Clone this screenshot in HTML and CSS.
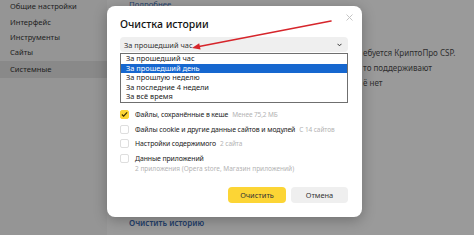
FILE: index.html
```html
<!DOCTYPE html>
<html lang="ru">
<head>
<meta charset="utf-8">
<link rel="stylesheet" href="styles.css">
</head>
<body>
<div class="page">
  <aside class="sidebar">
    <div class="nav-item">Общие настройки</div>
    <div class="nav-item">Интерфейс</div>
    <div class="nav-item">Инструменты</div>
    <div class="nav-item">Сайты</div>
    <div class="nav-item active">Системные</div>
  </aside>
  <main class="content">
    <div class="link more">Подробнее</div>
    <div class="text-lines">
      <div class="line">ебуется КриптоПро CSP.</div>
      <div class="line">то поддерживают</div>
      <div class="line">ё нет</div>
    </div>
    <div class="link clear-link">Очистить историю</div>
  </main>
</div>

<div class="modal">
  <div class="close">
    <svg width="7" height="7" viewBox="0 0 7 7"><path d="M0.5 0.5L6.5 6.5M6.5 0.5L0.5 6.5" stroke="#c4c4c4" stroke-width="1"/></svg>
  </div>
  <div class="title">Очистка истории</div>
  <div class="select">
    <span>За прошедший час</span>
    <svg class="chev" width="5" height="4" viewBox="0 0 5 4"><path d="M0.5 0.8L2.5 2.8L4.5 0.8" fill="none" stroke="#333" stroke-width="1"/></svg>
  </div>
  <div class="dropdown">
    <div class="opt">За прошедший час</div>
    <div class="opt selected">За прошедший день</div>
    <div class="opt">За прошлую неделю</div>
    <div class="opt">За последние 4 недели</div>
    <div class="opt">За всё время</div>
  </div>
  <div class="checks">
    <div class="row">
      <span class="box checked"><svg width="8" height="7" viewBox="0 0 8 7"><path d="M1 3.5L3 5.5L7 1.2" fill="none" stroke="#3a3000" stroke-width="1.3"/></svg></span>
      <span class="label">Файлы, сохранённые в кеше</span><span class="hint">Менее 75,2 МБ</span>
    </div>
    <div class="row">
      <span class="box"></span>
      <span class="label">Файлы cookie и другие данные сайтов и модулей</span><span class="hint">С 14 сайтов</span>
    </div>
    <div class="row">
      <span class="box"></span>
      <span class="label">Настройки содержимого</span><span class="hint">2 сайта</span>
    </div>
    <div class="row">
      <span class="box"></span>
      <span class="label">Данные приложений</span>
    </div>
    <div class="sub">2 приложения (Opera store, Магазин приложений)</div>
  </div>
  <div class="buttons">
    <div class="btn primary">Очистить</div>
    <div class="btn">Отмена</div>
  </div>
</div>

<svg class="arrow" width="474" height="235" viewBox="0 0 474 235">
  <line x1="331" y1="21" x2="199" y2="46.5" stroke="#d6252b" stroke-width="1.6" stroke-linecap="round"/>
  <polygon points="192,48 200.6,49.6 199.2,43.2" fill="#d6252b"/>
</svg>
</body>
</html>
```

FILE: styles.css
```css
html, body {
  margin: 0;
  padding: 0;
}
body {
  width: 474px;
  height: 235px;
  overflow: hidden;
  position: relative;
  font-family: "Noto Sans", "Open Sans", sans-serif;
  background: #9a9a9a;
  color: #222;
}
.page {
  display: flex;
  height: 235px;
}
.sidebar {
  width: 107px;
  flex: none;
  background: #959595;
  display: flex;
  flex-direction: column;
}
.nav-item {
  height: 15.4px;
  line-height: 15.4px;
  padding-left: 10px;
  font-size: 7.6px;
  color: #1e1e1e;
}
.nav-item:first-child {
  margin-top: -0.7px;
}
.nav-item.active {
  background: #898989;
  height: 17px;
  line-height: 17px;
}
.content {
  flex: 1;
  padding-left: 22px;
  display: flex;
  flex-direction: column;
}
.link {
  color: #24406b;
  font-size: 7.8px;
}
.more {
  margin-top: -1px;
  line-height: 10px;
}
.text-lines {
  margin-top: 36px;
  padding-left: 234px;
  display: flex;
  flex-direction: column;
}
.line {
  font-size: 8px;
  line-height: 15px;
  color: #2e2e2e;
  white-space: nowrap;
}
.clear-link {
  margin-top: 127px;
  font-weight: 600;
  font-size: 8px;
  line-height: 12px;
}

.modal {
  position: absolute;
  left: 107px;
  top: 6px;
  width: 255px;
  height: 211px;
  box-sizing: border-box;
  padding: 11px 14px 14px 13px;
  background: #fff;
  border-radius: 8px;
  box-shadow: 0 3px 14px rgba(0, 0, 0, 0.28);
  display: flex;
  flex-direction: column;
}
.close {
  position: absolute;
  right: 9px;
  top: 8px;
  display: flex;
}
.title {
  font-size: 10.5px;
  line-height: 14px;
  font-weight: 500;
  color: #111;
}
.select {
  margin-top: 6px;
  height: 15px;
  border-radius: 4px;
  background: #efefef;
  display: flex;
  align-items: center;
  justify-content: space-between;
  padding: 0 6px 0 4px;
  font-size: 7.4px;
  color: #333;
}
.chev {
  display: block;
}
.dropdown {
  position: absolute;
  left: 13px;
  top: 47px;
  width: 228px;
  box-sizing: border-box;
  border: 1px solid #6f6f6f;
  background: #fff;
  display: flex;
  flex-direction: column;
}
.opt {
  height: 9.6px;
  line-height: 9.6px;
  padding-left: 5px;
  font-size: 7.4px;
  color: #222;
}
.opt.selected {
  background: #1667cf;
  color: #fff;
}
.checks {
  margin-top: 55px;
  display: flex;
  flex-direction: column;
}
.row {
  height: 14.8px;
  display: flex;
  align-items: center;
  font-size: 6.9px;
  white-space: nowrap;
  letter-spacing: -0.1px;
}
.box {
  width: 9px;
  height: 9px;
  box-sizing: border-box;
  border: 1px solid #dedede;
  border-radius: 2px;
  margin-right: 6px;
  flex: none;
  display: flex;
  align-items: center;
  justify-content: center;
}
.box.checked {
  background: #fcd535;
  border-color: #fcd535;
}
.label {
  color: #222;
}
.hint {
  color: #b3b3b3;
  margin-left: 4px;
  font-size: 6.5px;
}
.sub {
  padding-left: 15px;
  font-size: 6.5px;
  color: #b3b3b3;
  line-height: 8px;
  margin-top: -1px;
  white-space: nowrap;
}
.buttons {
  margin-top: auto;
  display: flex;
  justify-content: flex-end;
  gap: 5px;
}
.btn {
  width: 57px;
  height: 16px;
  border-radius: 4px;
  background: #efefef;
  font-size: 7.4px;
  color: #333;
  display: flex;
  align-items: center;
  justify-content: center;
}
.btn.primary {
  background: #fcd535;
  width: 58px;
}
.arrow {
  position: absolute;
  left: 0;
  top: 0;
  pointer-events: none;
}
```
